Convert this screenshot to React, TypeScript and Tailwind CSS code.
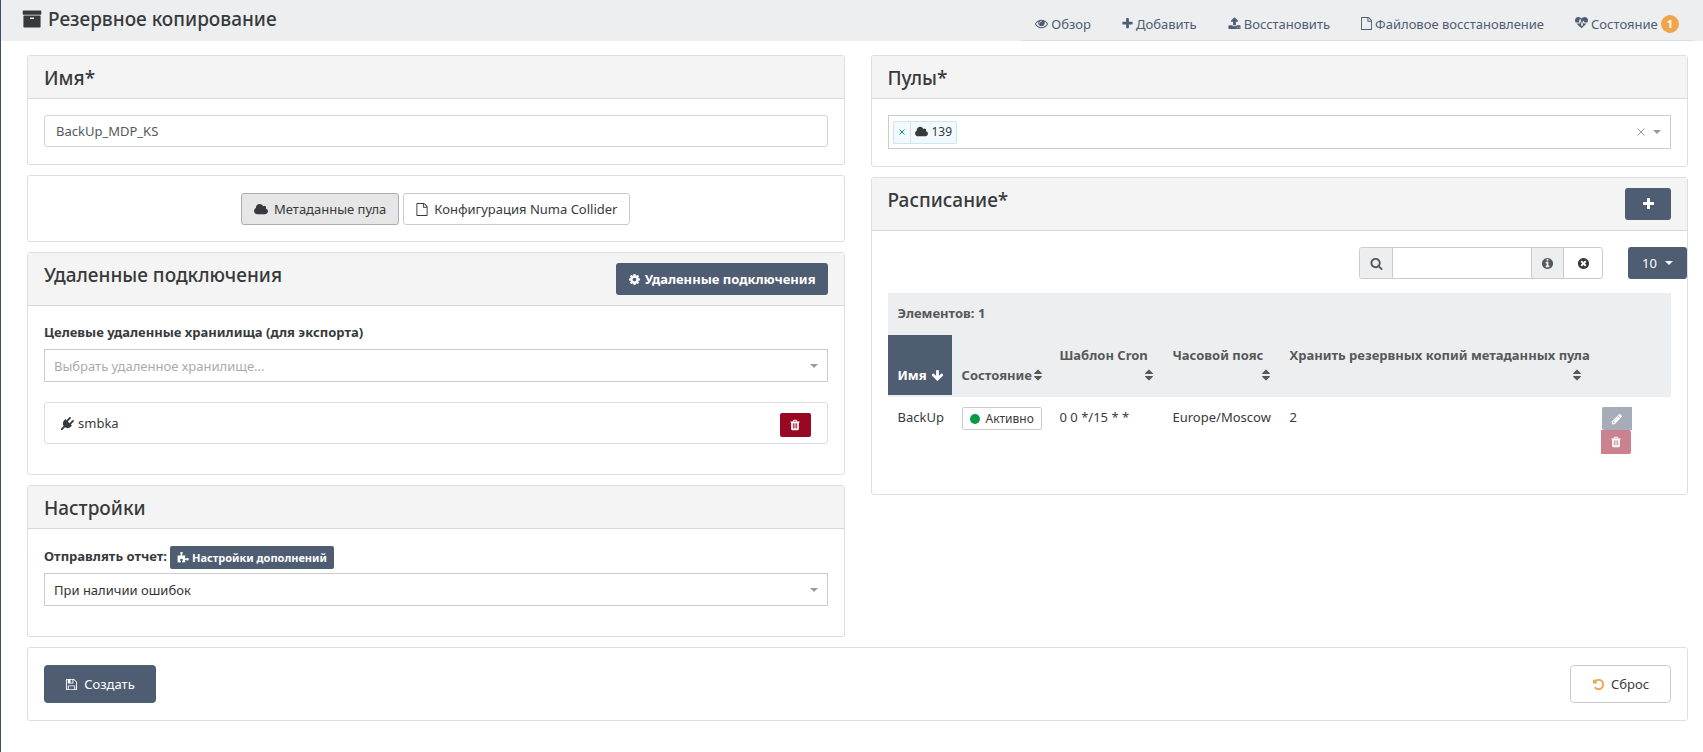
import React, { useState } from 'react';
import { clsx } from 'clsx';

const ICONS = {
  archive:
    'M1088 832q0-26-19-45t-45-19h-256q-26 0-45 19t-19 45 19 45 45 19h256q26 0 45-19t19-45zM1664 640v960q0 26-19 45t-45 19h-1408q-26 0-45-19t-19-45v-960q0-26 19-45t45-19h1408q26 0 45 19t19 45zM1728 192v256q0 26-19 45t-45 19h-1536q-26 0-45-19t-19-45v-256q0-26 19-45t45-19h1536q26 0 45 19t19 45z',
  eye: 'M1664 960q-152-236-381-353 61 104 61 225 0 185-131.500 316.500t-316.500 131.500-316.500-131.500-131.500-316.500q0-121 61-225-229 117-381 353 133 205 333.500 326.500t434.500 121.500 434.500-121.500 333.500-326.500zm-720-384q0-20-14-34t-34-14q-125 0-214.500 89.500t-89.500 214.500q0 20 14 34t34 14 34-14 14-34q0-86 61-147t147-61q20 0 34-14t14-34zm848 384q0 34-20 69-140 230-376.500 368.500t-499.500 138.500-499.500-139-376.500-368q-20-35-20-69t20-69q140-229 376.500-368t499.500-139 499.500 139 376.500 368q20 35 20 69z',
  plus: 'M1600 736v192q0 40-28 68t-68 28h-416v416q0 40-28 68t-68 28h-192q-40 0-68-28t-28-68v-416h-416q-40 0-68-28t-28-68v-192q0-40 28-68t68-28h416v-416q0-40 28-68t68-28h192q40 0 68 28t28 68v416h416q40 0 68 28t28 68z',
  upload:
    'M1344 1472q0-26-19-45t-45-19-45 19-19 45 19 45 45 19 45-19 19-45zm256 0q0-26-19-45t-45-19-45 19-19 45 19 45 45 19 45-19 19-45zm128-224v320q0 40-28 68t-68 28h-1472q-40 0-68-28t-28-68v-320q0-40 28-68t68-28h427q21 56 70.500 92t110.500 36h256q61 0 110.500-36t70.500-92h427q40 0 68 28t28 68zm-325-648q-17 40-59 40h-256v448q0 26-19 45t-45 19h-256q-26 0-45-19t-19-45v-448h-256q-42 0-59-40-17-39 14-69l448-448q18-19 45-19t45 19l448 448q31 30 14 69z',
  file: 'M1596 380q28 28 48 76t20 88v1152q0 40-28 68t-68 28h-1344q-40 0-68-28t-28-68v-1600q0-40 28-68t68-28h896q40 0 88 20t76 48zm-444-244v376h376q-10-29-22-41l-313-313q-12-12-41-22zm384 1528v-1024h-416q-40 0-68-28t-28-68v-416h-768v1536h1280z',
  heartbeat:
    'M1280 896h305q-5 6-10 10.500t-9 7.500l-3 4-623 600q-18 18-44 18t-44-18l-624-602q-5-2-21-20h369q22 0 39.500-13.500t22.500-34.500l70-281 190 667q6 20 23 33t39 13q21 0 38-13t23-33l146-485 56 112q18 35 57 35zm512-428q0 145-103 300h-369l-111-221q-8-17-25.500-27t-36.500-8q-45 5-56 46l-129 430-196-686q-6-20-23.500-33t-39.500-13-39 13.500-22 34.500l-116 464h-423q-103-155-103-300 0-220 127-344t351-124q62 0 126.500 21.500t120 58 95.500 68.500 76 68q36-36 76-68t95.500-68.500 120-58 126.500-21.500q224 0 351 124t127 344z',
  cloud:
    'M1984 1152q0 159-112.500 271.500t-271.500 112.500h-1088q-185 0-316.500-131.500t-131.500-316.500q0-132 71-241.500t187-163.500q-2-28-2-43 0-212 150-362t362-150q158 0 286.500 88t187.500 230q70-62 166-62 106 0 181 75t75 181q0 75-41 138 129 30 213 134.500t84 239.500z',
  gear: 'M1152 896q0-106-75-181t-181-75-181 75-75 181 75 181 181 75 181-75 75-181zm512-109v222q0 12-8 23t-20 13l-185 28q-19 54-39 91 35 50 107 138 10 12 10 25t-9 23q-27 37-99 108t-94 71q-12 0-26-9l-138-108q-44 23-91 38-16 136-29 186-7 28-36 28h-222q-14 0-24.500-8.500t-11.500-21.500l-28-184q-49-16-90-37l-141 107q-10 9-25 9-14 0-25-11-126-114-165-168-7-10-7-23 0-12 8-23 15-21 51-66.500t54-70.500q-27-50-41-99l-183-27q-13-2-21-12.500t-8-23.500v-222q0-12 8-23t19-13l186-28q14-46 39-92-40-57-107-138-10-12-10-24 0-10 9-23 26-36 98.500-107.500t94.500-71.500q13 0 26 10l138 107q44-23 91-38 16-136 29-186 7-28 36-28h222q14 0 24.500 8.500t11.500 21.500l28 184q49 16 90 37l142-107q9-9 24-9 13 0 25 10 129 119 165 170 7 8 7 22 0 12-8 23-15 21-51 66.500t-54 70.500q26 50 41 98l183 28q13 2 21 12.500t8 23.500z',
  plug: 'M1755 453q37 38 37 90.500t-37 90.500l-401 400 150 150-160 160q-163 163-389.500 186.500t-411.500-100.500l-362 362h-181v-181l362-362q-124-185-100.500-411.500t186.500-389.500l160-160 150 150 400-401q38-37 91-37t90 37 37 90.500-37 90.500l-400 401 234 234 401-400q38-37 91-37t90 37z',
  trash:
    'M704 1376v-704q0-14-9-23t-23-9h-64q-14 0-23 9t-9 23v704q0 14 9 23t23 9h64q14 0 23-9t9-23zm256 0v-704q0-14-9-23t-23-9h-64q-14 0-23 9t-9 23v704q0 14 9 23t23 9h64q14 0 23-9t9-23zm256 0v-704q0-14-9-23t-23-9h-64q-14 0-23 9t-9 23v704q0 14 9 23t23 9h64q14 0 23-9t9-23zm-544-992h448l-48-117q-7-9-17-11h-317q-10 2-17 11zm928 32v64q0 14-9 23t-23 9h-96v948q0 83-47 143.500t-113 60.500h-832q-66 0-113-58.500t-47-141.500v-952h-96q-14 0-23-9t-9-23v-64q0-14 9-23t23-9h309l70-167q15-37 54-63t79-26h320q40 0 79 26t54 63l70 167h309q14 0 23 9t9 23z',
  puzzle:
    'M1755 1083q0 81-44.500 135t-123.500 54q-41 0-77.500-17.500t-59-38-56.500-38-71-17.500q-110 0-110 124 0 39 16 115t15 115v5q-22 0-33 1-34 3-97.500 11.500t-115.500 13.500-98 5q-61 0-103-26.500t-42-83.500q0-37 17.500-71t38-56.500 38-59 17.500-77.500q0-79-54-123.500t-135-44.500q-84 0-143 45.500t-59 127.500q0 43 15 83t33.500 64.500 33.500 53 15 50.500q0 45-46 89-37 35-117 35-95 0-245-24-9-2-27.500-4t-27.500-4l-13-2q-1 0-3-1-2 0-2-1v-1024q2 1 17.500 3.500t34 5 21.500 3.500q150 24 245 24 80 0 117-35 46-44 46-89 0-22-15-50.500t-33.500-53-33.500-64.500-15-83q0-82 59-127.500t144-45.500q80 0 134 44.500t54 123.500q0 41-17.500 77.500t-38 59-38 56.500-17.500 71q0 57 42 83.500t103 26.500q64 0 180-15t163-17v2q-1 2-3.500 17.500t-5 34-3.500 21.500q-24 150-24 245 0 80 35 117 44 46 89 46 22 0 50.500-15t53-33.500 64.500-33.500 83-15q82 0 127.500 59t45.500 143z',
  save: 'M512 1536h768v-384h-768v384zm896 0h128v-896q0-14-10-38.500t-20-34.500l-281-281q-10-10-34-20t-39-10v416q0 40-28 68t-68 28h-576q-40 0-68-28t-28-68v-416h-128v1280h128v-416q0-40 28-68t68-28h832q40 0 68 28t28 68v416zm-384-928v-320q0-13-9.500-22.500t-22.500-9.500h-192q-13 0-22.500 9.500t-9.500 22.500v320q0 13 9.500 22.500t22.500 9.500h192q13 0 22.500-9.500t9.500-22.500zm640 32v928q0 40-28 68t-68 28h-1344q-40 0-68-28t-28-68v-1344q0-40 28-68t68-28h928q40 0 88 20t76 48l280 280q28 28 48 76t20 88z',
  undo: 'M1664 896q0 156-61 298t-164 245-245 164-298 61q-172 0-327-72.500t-264-204.500q-7-10-6.500-22.500t8.500-20.500l137-138q10-9 25-9 16 2 23 12 73 95 179 147t225 52q104 0 198.500-40.500t163.500-109.500 109.500-163.500 40.500-198.500-40.500-198.500-109.500-163.500-163.500-109.500-198.500-40.500q-98 0-188 35.500t-160 101.500l137 138q31 30 14 69-17 40-59 40h-448q-26 0-45-19t-19-45v-448q0-42 40-59 39-17 69 14l130 129q107-101 244.500-156.500t284.500-55.500q156 0 298 61t245 164 164 245 61 298z',
  search:
    'M1216 832q0-185-131.500-316.500t-316.500-131.500-316.500 131.500-131.500 316.500 131.500 316.500 316.500 131.500 316.500-131.500 131.500-316.500zm512 832q0 52-38 90t-90 38q-54 0-90-38l-343-342q-179 124-399 124-143 0-273.500-55.500t-225-150-150-225-55.500-273.500 55.500-273.500 150-225 225-150 273.500-55.500 273.500 55.500 225 150 150 225 55.500 273.500q0 220-124 399l343 343q37 37 37 90z',
  info: 'M1152 1376v-160q0-14-9-23t-23-9h-96v-512q0-14-9-23t-23-9h-320q-14 0-23 9t-9 23v160q0 14 9 23t23 9h96v320h-96q-14 0-23 9t-9 23v160q0 14 9 23t23 9h448q14 0 23-9t9-23zm-128-896v-160q0-14-9-23t-23-9h-192q-14 0-23 9t-9 23v160q0 14 9 23t23 9h192q14 0 23-9t9-23zm640 416q0 209-103 385.500t-279.500 279.500-385.500 103-385.500-103-279.500-279.500-103-385.500 103-385.500 279.500-279.500 385.500-103 385.500 103 279.500 279.500 103 385.500z',
  clear:
    'M1277 1122q0-26-19-45l-181-181 181-181q19-19 19-45 0-27-19-46l-90-90q-19-19-46-19-26 0-45 19l-181 181-181-181q-19-19-45-19-27 0-46 19l-90 90q-19 19-19 46 0 26 19 45l181 181-181 181q-19 19-19 45 0 27 19 46l90 90q19 19 46 19 26 0 45-19l181-181 181 181q19 19 45 19 27 0 46-19l90-90q19-19 19-46zm387-226q0 209-103 385.500t-279.500 279.500-385.500 103-385.500-103-279.500-279.500-103-385.500 103-385.500 279.500-279.500 385.500-103 385.500 103 279.500 279.500 103 385.500z',
  pencil:
    'M491 1536l91-91-235-235-91 91v107h128v128h107zm523-928q0-22-22-22-10 0-17 7l-542 542q-7 7-7 17 0 22 22 22 10 0 17-7l542-542q7-7 7-17zm-54-192l416 416-832 832h-416v-416zm683 96q0 53-37 90l-166 166-416-416 166-165q36-38 90-38 53 0 91 38l235 234q37 39 37 91z',
  arrowDown:
    'M1675 832q0 53-37 90l-651 652q-39 37-91 37-53 0-90-37l-651-652q-38-36-38-90 0-53 38-91l74-75q39-37 91-37 53 0 90 37l294 294v-704q0-52 38-90t90-38h128q52 0 90 38t38 90v704l294-294q37-37 90-37 52 0 91 37l75 75q37 39 37 91z',
  sort: 'M1408 1088q0 26-19 45l-448 448q-19 19-45 19t-45-19l-448-448q-19-19-19-45t19-45 45-19h896q26 0 45 19t19 45zm0-384q0 26-19 45t-45 19h-896q-26 0-45-19t-19-45 19-45l448-448q19-19 45-19t45 19l448 448q19 19 19 45z',
};

type IconName = keyof typeof ICONS;

// glyphs that do not fill the usual 1792 square
const VIEW_BOX: Partial<Record<IconName, string>> = {
  cloud: '64 0 1920 1792',
  sort: '384 0 1024 1792',
  plus: '192 0 1408 1792',
  file: '128 0 1536 1792',
};

function Icon({ name, className = 'h-[13px] w-[13px]' }: { name: IconName; className?: string }) {
  return (
    <svg viewBox={VIEW_BOX[name] ?? '0 0 1792 1792'} fill="currentColor" aria-hidden="true" className={clsx('shrink-0', className)}>
      <path d={ICONS[name]} />
    </svg>
  );
}

function Caret({ className }: { className?: string }) {
  return (
    <svg viewBox="0 0 8 4" fill="currentColor" aria-hidden="true" className={clsx('h-1 w-2 shrink-0', className)}>
      <path d="M0 0h8L4 4z" />
    </svg>
  );
}

type CardProps = {
  title?: string;
  action?: React.ReactNode;
  bodyClass?: string;
  children: React.ReactNode;
};

function Card({ title, action, bodyClass = 'p-4', children }: CardProps) {
  return (
    <section className="rounded-[3px] border border-[#dedede] bg-white">
      {title && (
        <div className="flex items-start justify-between border-b border-[#d8d8d8] bg-[#f4f4f4] px-4 py-2.5">
          <h2 className="pt-0.5 text-[19px] leading-5 font-medium">{title}</h2>
          {action}
        </div>
      )}
      <div className={bodyClass}>{children}</div>
    </section>
  );
}

type SelectProps = {
  id: string;
  value: string;
  options: string[];
  placeholder?: boolean;
  onChange: (value: string) => void;
};

function Select({ id, value, options, placeholder, onChange }: SelectProps) {
  return (
    <div className="relative">
      <select
        id={id}
        value={value}
        onChange={(e) => onChange(e.target.value)}
        className={clsx(
          'block h-[33px] w-full appearance-none border border-[#ccc] bg-white px-[9px] text-[13px]',
          placeholder ? 'text-[#aaa]' : 'text-[#333]',
        )}
      >
        {options.map((option) => (
          <option key={option}>{option}</option>
        ))}
      </select>
      <Caret className="pointer-events-none absolute top-[15px] right-2.5 text-[#999]" />
    </div>
  );
}

const NAV: { icon: IconName; label: string; iconClass?: string; badge?: number }[] = [
  { icon: 'eye', label: 'Обзор' },
  { icon: 'plus', label: 'Добавить', iconClass: 'h-[13px] w-[11px]' },
  { icon: 'upload', label: 'Восстановить' },
  { icon: 'file', label: 'Файловое восстановление', iconClass: 'h-[13px] w-[11px]' },
  { icon: 'heartbeat', label: 'Состояние', badge: 1 },
];

const COLUMNS = ['Шаблон Cron', 'Часовой пояс', 'Хранить резервных копий метаданных пула'];

const SCHEDULES = [{ name: 'BackUp', state: 'Активно', cron: '0 0 */15 * *', timezone: 'Europe/Moscow', retention: 2 }];

const primary = 'flex items-center justify-center bg-[#4f5d73] text-white';

function ScheduleTable() {
  return (
    <table className="w-full table-fixed border-collapse text-left text-[13px] leading-5">
      <colgroup>
        <col className="w-16" />
        <col className="w-[98px]" />
        <col className="w-[113px]" />
        <col className="w-[117px]" />
        <col />
        <col className="w-20" />
      </colgroup>
      <thead className="border-b-2 border-[#eceeef] bg-[#eceeef] text-[#55595c]">
        <tr>
          <th colSpan={6} className="border-b-2 border-[#eceeef] p-2.5 font-bold">
            Элементов: {SCHEDULES.length}
          </th>
        </tr>
        <tr className="align-bottom">
          <th className="bg-[#4f5d73] py-2.5 pl-2.5 font-bold text-white">
            <span className="flex items-center gap-1">
              Имя <Icon name="arrowDown" />
            </span>
          </th>
          <th className="py-2.5 pl-2.5 font-bold">
            <span className="flex items-center gap-0.5">
              Состояние <Icon name="sort" className="h-3.5 w-2" />
            </span>
          </th>
          {COLUMNS.map((column) => (
            <th key={column} className="p-2.5 font-bold whitespace-nowrap">
              {column}
              <span className="flex h-5 items-center justify-end">
                <Icon name="sort" className="h-3.5 w-2" />
              </span>
            </th>
          ))}
          <th />
        </tr>
      </thead>
      <tbody>
        {SCHEDULES.map((schedule) => (
          <tr key={schedule.name} className="align-top">
            <td className="p-2.5">{schedule.name}</td>
            <td className="py-2.5 pl-2.5">
              <button className="flex h-[23px] items-center gap-1.5 rounded-[2px] border border-[#ccc] px-[7px] text-xs">
                <span className="h-2.5 w-2.5 rounded-full bg-[#0a9a44]" />
                {schedule.state}
              </button>
            </td>
            <td className="p-2.5">{schedule.cron}</td>
            <td className="py-2.5 pl-2.5 whitespace-nowrap">{schedule.timezone}</td>
            <td className="p-2.5">{schedule.retention}</td>
            <td className="p-2.5">
              <button disabled aria-label="Изменить" className={clsx(primary, 'ml-px h-[23px] w-[30px] rounded-l-[2px] opacity-50')}>
                <Icon name="pencil" className="h-3 w-3" />
              </button>
              <button
                disabled
                aria-label="Удалить"
                className="flex h-6 w-[30px] items-center justify-center rounded-r-[2px] bg-[#990822] text-white opacity-50"
              >
                <Icon name="trash" className="h-3 w-3" />
              </button>
            </td>
          </tr>
        ))}
      </tbody>
    </table>
  );
}

export default function App() {
  const [name, setName] = useState('BackUp_MDP_KS');
  const [mode, setMode] = useState('pool');
  const [remote, setRemote] = useState('Выбрать удаленное хранилище...');
  const [report, setReport] = useState('При наличии ошибок');
  const [filter, setFilter] = useState('');

  const modeButton = 'flex h-8 items-center gap-1.5 rounded-[3px] border px-3';

  return (
    <div className="min-h-screen border-l border-[#3f4d66] bg-white font-['Noto_Sans','Liberation_Sans',sans-serif] text-[13px] leading-5 text-[#373a3c]">
      <header className="flex h-[41px] items-end justify-between bg-[#eceeef] pr-2.5 pl-[21px]">
        <h1 className="flex items-center gap-1.5 self-start pt-[7px] text-[19px] leading-6 font-medium">
          <Icon name="archive" className="h-5 w-5" />
          Резервное копирование
        </h1>
        <nav className="flex h-[34px] gap-[3px] border-b border-[#dadcdd] text-[#4f5d73]">
          {NAV.map((item) => (
            <a key={item.label} href="#" className="flex items-center gap-[3px] px-3.5 whitespace-nowrap">
              <Icon name={item.icon} className={item.iconClass} />
              {item.label}
              {item.badge && (
                <span className="rounded-full bg-[#f0a54a] px-1.5 text-[11px] leading-[18px] font-bold text-white">{item.badge}</span>
              )}
            </a>
          ))}
        </nav>
      </header>

      <form onSubmit={(e) => e.preventDefault()} className="grid grid-cols-2 items-start gap-x-[26px] gap-y-2.5 pt-3.5 pr-[15px] pl-[26px]">
        <div className="flex flex-col gap-2.5">
          <Card title="Имя*" bodyClass="px-4 pt-4 pb-[17px]">
            <input
              aria-label="Имя"
              value={name}
              onChange={(e) => setName(e.target.value)}
              className="block h-8 w-full rounded-[3px] border border-[#d4d4d4] px-[11px] text-[#55595c]"
            />
          </Card>

          <Card bodyClass="flex justify-center gap-1 px-4 pt-[17px] pb-4">
            <button
              type="button"
              aria-pressed={mode === 'pool'}
              onClick={() => setMode('pool')}
              className={clsx(modeButton, mode === 'pool' ? 'border-[#adadad] bg-[#e6e6e6]' : 'border-[#ccc] bg-white')}
            >
              <Icon name="cloud" className="h-[13px] w-3.5" />
              Метаданные пула
            </button>
            <button
              type="button"
              aria-pressed={mode === 'config'}
              onClick={() => setMode('config')}
              className={clsx(modeButton, mode === 'config' ? 'border-[#adadad] bg-[#e6e6e6]' : 'border-[#ccc] bg-white')}
            >
              <Icon name="file" className="h-[13px] w-3" />
              Конфигурация Numa Collider
            </button>
          </Card>

          <Card
            title="Удаленные подключения"
            action={
              <a href="#" className={clsx(primary, 'h-8 gap-1 rounded-[3px] px-3 font-bold')}>
                <Icon name="gear" />
                Удаленные подключения
              </a>
            }
            bodyClass="px-4 pt-4 pb-[30px]"
          >
            <label htmlFor="remote" className="mb-[7px] block font-bold">
              Целевые удаленные хранилища (для экспорта)
            </label>
            <Select id="remote" value={remote} options={['Выбрать удаленное хранилище...']} placeholder onChange={setRemote} />
            <ul className="mt-5">
              <li className="flex h-[42px] items-center justify-between rounded-[3px] border border-[#dedede] px-4">
                <span className="flex items-center gap-1">
                  <Icon name="plug" />
                  smbka
                </span>
                <button
                  type="button"
                  aria-label="Удалить smbka"
                  className="mt-1 flex h-6 w-[31px] items-center justify-center rounded-[2px] bg-[#990822] text-white"
                >
                  <Icon name="trash" className="h-3 w-3" />
                </button>
              </li>
            </ul>
          </Card>

          <Card title="Настройки" bodyClass="px-4 pt-[17px] pb-[30px]">
            <div className="mb-1 flex items-start gap-[3px]">
              <label htmlFor="report" className="font-bold">
                Отправлять отчет:
              </label>
              <a href="#" className={clsx(primary, 'h-[23px] gap-[3px] rounded-[2px] px-[7px] text-[11px] font-bold')}>
                <Icon name="puzzle" className="h-3 w-3" />
                Настройки дополнений
              </a>
            </div>
            <Select id="report" value={report} options={['При наличии ошибок']} onChange={setReport} />
          </Card>
        </div>

        <div className="flex flex-col gap-2.5">
          <Card title="Пулы*" bodyClass="px-4 pt-4 pb-[17px]">
            <div className="flex h-[34px] items-center border border-[#ccc] px-1">
              <div className="flex h-[23px] items-center rounded-[2px] border border-[#c9e6f2] bg-[#f2f9fc]">
                <button type="button" aria-label="Убрать 139" className="h-full border-r border-[#c9e6f2] px-[5px] text-[#0088cc]">
                  <svg viewBox="0 0 6 6" stroke="currentColor" aria-hidden="true" className="h-1.5 w-1.5">
                    <path d="M.5.5l5 5M5.500.5l-5 5" />
                  </svg>
                </button>
                <span className="flex items-center gap-1 px-1 text-xs">
                  <Icon name="cloud" className="h-3 w-[13px]" />
                  139
                </span>
              </div>
              <input aria-label="Пулы" className="h-6 min-w-0 flex-1 px-1 outline-none" />
              <button type="button" aria-label="Очистить" className="mr-2 text-[#999]">
                <svg viewBox="0 0 8 8" stroke="currentColor" aria-hidden="true" className="h-2 w-2">
                  <path d="M.5.5l7 7M7.500.5l-7 7" />
                </svg>
              </button>
              <Caret className="mr-[5px] text-[#999]" />
            </div>
          </Card>

          <Card
            title="Расписание*"
            action={
              <button type="button" aria-label="Добавить расписание" className={clsx(primary, 'h-8 w-[46px] rounded-[3px]')}>
                <Icon name="plus" className="h-3.5 w-[11px]" />
              </button>
            }
            bodyClass="pt-4 pb-[30px]"
          >
            <div className="flex justify-end gap-[25px]">
              <div className="flex h-8 overflow-hidden rounded-[3px] border border-[#ccc]">
                <label htmlFor="filter" className="flex w-[33px] items-center justify-center border-r border-[#ccc] bg-[#eceeef] text-[#55595c]">
                  <Icon name="search" />
                </label>
                <input
                  id="filter"
                  aria-label="Поиск"
                  value={filter}
                  onChange={(e) => setFilter(e.target.value)}
                  className="w-[138px] px-3 outline-none"
                />
                <button
                  type="button"
                  aria-label="Справка"
                  className="flex w-[33px] items-center justify-center border-x border-[#ccc] bg-[#eceeef] text-[#55595c]"
                >
                  <Icon name="info" />
                </button>
                <button type="button" aria-label="Очистить поиск" onClick={() => setFilter('')} className="flex w-[38px] items-center justify-center">
                  <Icon name="clear" />
                </button>
              </div>
              <button type="button" aria-haspopup="menu" className={clsx(primary, 'h-8 w-[59px] gap-2 rounded-[3px]')}>
                10
                <Caret />
              </button>
            </div>
            <div className="mx-4 mt-3.5">
              <ScheduleTable />
            </div>
          </Card>
        </div>

        <div className="col-span-2">
          <Card bodyClass="flex justify-between px-4 py-[17px]">
            <button type="submit" className={clsx(primary, 'h-[38px] w-28 gap-1.5 rounded-[4px]')}>
              <Icon name="save" />
              Создать
            </button>
            <button type="reset" className="flex h-[38px] w-[101px] items-center justify-center gap-1.5 rounded-[4px] border border-[#ccc]">
              <Icon name="undo" className="h-[13px] w-[13px] text-[#f0a54a]" />
              Сброс
            </button>
          </Card>
        </div>
      </form>
    </div>
  );
}
